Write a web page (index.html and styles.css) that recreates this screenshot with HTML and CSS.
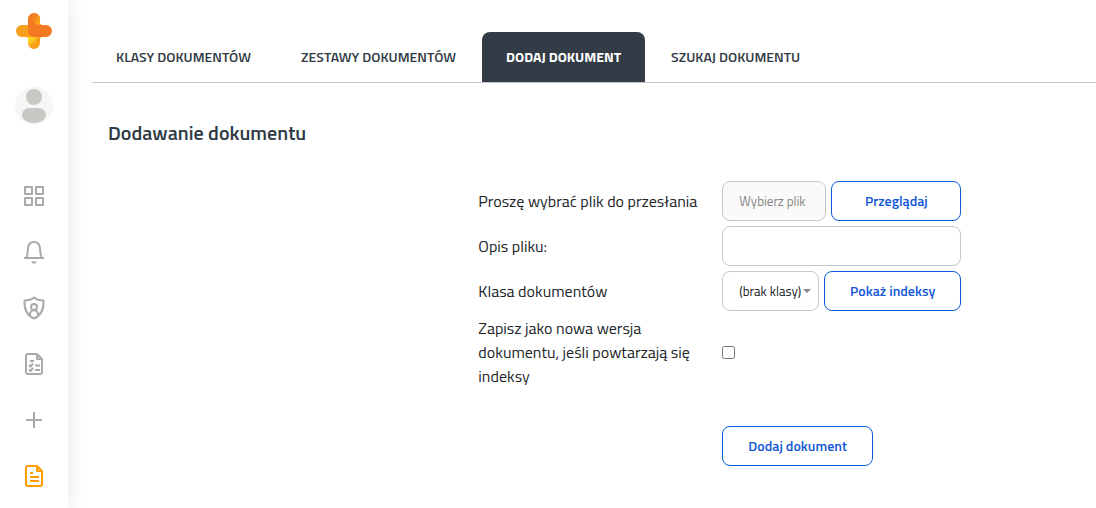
FILE: index.html
```html
<!DOCTYPE html>
<html lang="pl">
<head>
  <meta charset="UTF-8" />
  <title>Dodawanie dokumentu</title>
  <meta name="viewport" content="width=device-width, initial-scale=1.0" />
  <link rel="stylesheet" href="styles.css">
</head>
<body>

  <aside class="sidebar">
    <a class="logo" href="#">
      <svg width="36" height="36" viewBox="0 0 36 36">
        <defs>
          <linearGradient id="top" x1="0" y1="0" x2="1" y2="1">
            <stop offset="0.3" stop-color="#f58220" />
            <stop offset="1" stop-color="#fdb913" />
          </linearGradient>
          <linearGradient id="bottom" x1="0" y1="0" x2="1" y2="1">
            <stop offset="0.2" stop-color="#fde725" />
            <stop offset="1" stop-color="#f99d1c" />
          </linearGradient>
        </defs>
        <path d="M10 24c1 0 2 1 2 2v4a6 6 0 0 0 12 0v-4c0-1 1-2 2-2z" fill="#f9a01b" />
        <path d="M10 24c6 0 10-1 11-3 1 5-3 10-8 11-1-2-1-3-1-6 0-1-1-2-2-2z" fill="url(#bottom)" />
        <rect x="0" y="12" width="24" height="12" rx="6" fill="#f9a01b" />
        <path d="M12 18V6a6 6 0 0 1 12 0v4c0 1 1 2 2 2h4a6 6 0 0 1 0 12H18a6 6 0 0 1-6-6z" fill="#f47920" />
        <path d="M16 1c4-2 8 1 8 5v4c0 1 1 2 2 2h-2c-6 0-9-5-8-11z" fill="url(#top)" />
      </svg>
    </a>
    <a class="avatar" href="#">
      <svg width="38" height="38" viewBox="0 0 38 38">
        <circle cx="19" cy="19" r="19" fill="#f6f6f6" />
        <circle cx="19" cy="10" r="8" fill="#c8c8c4" />
        <path d="M7 29c0-5 3-8 8-8h8c5 0 8 3 8 8-1 4-6 7-12 7S8 33 7 29z" fill="#c8c8c4" />
      </svg>
    </a>
    <nav class="menu">
      <a href="#">
        <svg viewBox="0 0 24 24"><path d="M3 3h7v7H3zM14 3h7v7h-7zM3 14h7v7H3zM14 14h7v7h-7z" /></svg>
      </a>
      <a href="#">
        <svg viewBox="0 0 24 24"><path d="M2 18h20M4 18c2-3 1.500-6 2-10 .5-4 3-6 6-6s5.500 2 6 6c.5 4 0 7 2 10M10 21.500c1 1.500 3 1.500 4 0" /></svg>
      </a>
      <a href="#">
        <svg viewBox="0 0 24 24"><path d="M12 1.500C9 4 6 4.500 2.500 4.500 2 13 4 19 12 22.500 20 19 22 13 21.500 4.500 18 4.500 15 4 12 1.500z" /><circle cx="12" cy="11" r="3" /><path d="M8 19.500c-1-7 9-7 8 0" /></svg>
      </a>
      <a href="#">
        <svg viewBox="0 0 24 24"><path d="M15 2H6a2 2 0 0 0-2 2v16a2 2 0 0 0 2 2h12a2 2 0 0 0 2-2V7zM15 2v5h5M13 13.500h5M13 18h5M8 9h4" /><path d="M7 13l1.500 1.500L11 11.500M7 17.500L8.500 19l2.500-3" /></svg>
      </a>
      <a href="#">
        <svg viewBox="0 0 24 24"><path d="M12 4v16M4 12h16" /></svg>
      </a>
      <a class="active" href="#">
        <svg viewBox="0 0 24 24"><path d="M15 2H6a2 2 0 0 0-2 2v16a2 2 0 0 0 2 2h12a2 2 0 0 0 2-2V7zM15 2v5h5M8 9h3M8 13h9M8 17h9" /></svg>
      </a>
    </nav>
  </aside>

  <main class="content">
    <nav class="tabs">
      <a href="#">KLASY DOKUMENTÓW</a>
      <a href="#">ZESTAWY DOKUMENTÓW</a>
      <a class="active" href="#">DODAJ DOKUMENT</a>
      <a href="#">SZUKAJ DOKUMENTU</a>
    </nav>

    <section class="panel">
      <h1>Dodawanie dokumentu</h1>

      <div class="form-area">
        <form class="upload-form">
          <label for="file">Proszę wybrać plik do przesłania</label>
          <div class="field">
            <input class="text-input" id="file" type="text" size="1" placeholder="Wybierz plik" disabled />
            <button class="button browse" type="button">Przeglądaj</button>
          </div>

          <label for="description">Opis pliku:</label>
          <div class="field">
            <input class="text-input" id="description" type="text" />
          </div>

          <label for="doc-class">Klasa dokumentów</label>
          <div class="field">
            <div class="select">
              <select id="doc-class">
                <option>(brak klasy)</option>
              </select>
            </div>
            <button class="button" type="button">Pokaż indeksy</button>
          </div>

          <label for="new-version">Zapisz jako nowa wersja dokumentu, jeśli powtarzają się indeksy</label>
          <div class="field">
            <input class="checkbox" id="new-version" type="checkbox" />
          </div>

          <button class="button submit" type="submit">Dodaj dokument</button>
        </form>
      </div>
    </section>
  </main>

</body>
</html>
```
FILE: styles.css
```css
* {
  box-sizing: border-box;
}

body {
  margin: 0;
  min-height: 100vh;
  display: flex;
  background: #fff;
  color: #212529;
  font-family: 'Titillium Web', Roboto, sans-serif;
  font-size: 16px;
  line-height: 24px;
}

a {
  color: inherit;
  text-decoration: none;
}

/* Sidebar */

.sidebar {
  flex: none;
  width: 68px;
  padding-top: 13px;
  display: flex;
  flex-direction: column;
  align-items: center;
  box-shadow: 0 0 20px rgba(0, 0, 0, 0.1);
}

.sidebar a,
.sidebar svg {
  display: block;
}

.avatar {
  margin: 38px 0 59px;
}

.menu {
  display: flex;
  flex-direction: column;
  gap: 32px;
  color: #aaa;
}

.menu svg {
  width: 24px;
  height: 24px;
  fill: none;
  stroke: currentColor;
  stroke-width: 2;
  stroke-linejoin: round;
}

.menu .active {
  color: #ff9d00;
}

/* Tabs */

.content {
  flex: 1;
  min-width: 0;
  padding: 32px 0 40px 24px;
}

.tabs {
  display: flex;
  gap: 2px;
  border-bottom: 1px solid #c8c8c8;
  color: #303a44;
  font-size: 14px;
  font-weight: 600;
}

.tabs a {
  padding: 13px 24px;
  border-radius: 8px 8px 0 0;
  white-space: nowrap;
}

.tabs .active {
  background: #333c46;
  color: #fff;
  font-weight: 700;
}

/* Form */

.panel {
  padding: 34px 0 0 16px;
}

h1 {
  margin: 0;
  color: #303a44;
  font-size: 20px;
  font-weight: 600;
  line-height: 32px;
}

.form-area {
  display: grid;
  grid-template-columns: 11fr auto 4fr;
  margin-top: 32px;
}

.upload-form {
  grid-column: 2;
  display: grid;
  grid-template-columns: 220px 239px;
  gap: 5px 24px;
  align-items: center;
}

.field {
  display: flex;
  gap: 5px;
}

.text-input,
select {
  width: 100%;
  min-width: 0;
  height: 40px;
  padding: 0 16px;
  border: 1px solid #c8c8cc;
  border-radius: 8px;
  background: #fff;
  color: #212529;
  font-family: inherit;
  font-size: 13px;
}

.text-input {
  flex: 1;
}

.text-input:disabled {
  background: #fafafa;
}

.text-input::placeholder {
  color: #858585;
}

.select {
  position: relative;
  flex: 1;
}

.select::after {
  content: '';
  position: absolute;
  top: 18px;
  right: 8px;
  border: 4px solid transparent;
  border-top-color: #888;
  border-bottom: 0;
  pointer-events: none;
}

select {
  appearance: none;
  padding-right: 0;
}

.button {
  height: 40px;
  padding: 0 25px 2px;
  border: 1px solid #0b5ed7;
  border-radius: 8px;
  background: #fff;
  color: #1558d6;
  font-family: inherit;
  font-size: 14px;
  font-weight: 600;
  white-space: nowrap;
  cursor: pointer;
}

.browse {
  min-width: 130px;
}

.checkbox {
  width: 13px;
  height: 13px;
  margin: 0;
}

.submit {
  grid-column: 2;
  justify-self: start;
  margin-top: 33px;
}
```
